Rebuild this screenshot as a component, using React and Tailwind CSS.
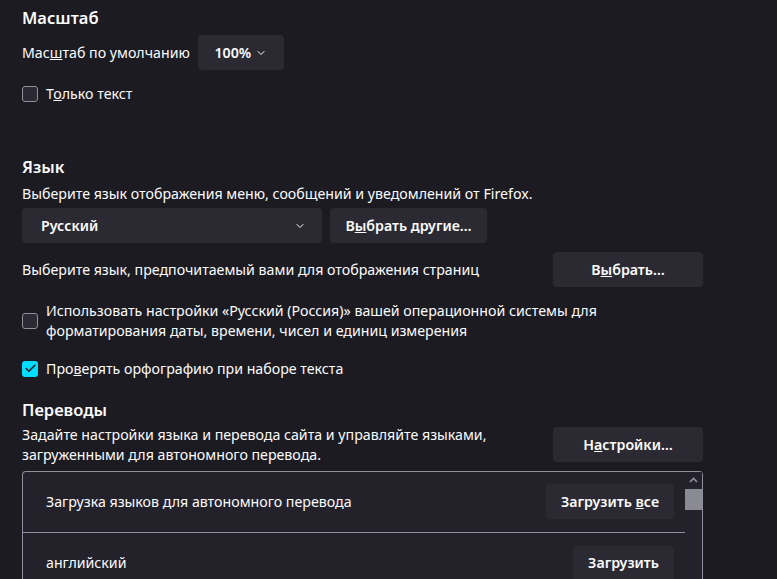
import { ChevronDown, Check } from 'lucide-react';

function Btn({ children, className = '' }) {
  return (
    <button className={`h-[35px] rounded-[4px] bg-[#2b2a33] text-[14.2px] font-semibold text-[#fbfbfe] ${className}`}>
      {children}
    </button>
  );
}

function Box({ checked }) {
  return checked ? (
    <span className="flex h-4 w-4 flex-shrink-0 items-center justify-center rounded-[3px] bg-[#00ddff]">
      <Check size={13} strokeWidth={3} className="text-[#1c1b22]" />
    </span>
  ) : (
    <span className="h-4 w-4 flex-shrink-0 rounded-[3px] border border-[#8f8f9d] bg-[#2b2a33]" />
  );
}

export default function App() {
  return (
    <div className="h-[579px] w-[777px] overflow-hidden bg-[#1c1b22] text-[#fbfbfe]" style={{ fontFamily: '"Noto Sans", sans-serif' }}>
      <div className="w-[703px] pl-[22px]">

        {/* Масштаб */}
        <h2 className="pt-[6px] text-[16.5px] font-semibold leading-6">Масштаб</h2>
        <div className="mt-[5px] flex items-center gap-[8px]">
          <span className="text-[14.2px]">Мас<u>ш</u>таб по умолчанию</span>
          <Btn className="flex w-[86px] items-center justify-center gap-1">
            100% <ChevronDown size={12} />
          </Btn>
        </div>
        <label className="mt-[13px] flex items-center gap-[8px] text-[14.2px]">
          <Box />
          <span>Т<u>о</u>лько текст</span>
        </label>

        {/* Язык */}
        <h2 className="mt-[51px] text-[16.5px] font-semibold leading-6">Язык</h2>
        <p className="mt-[5px] text-[14.2px] leading-5">Выберите язык отображения меню, сообщений и уведомлений от Firefox.</p>
        <div className="mt-[4px] flex gap-[8px]">
          <div className="flex h-[35px] w-[300px] items-center justify-between rounded-[4px] bg-[#2b2a33] pl-[19px] pr-[16px] text-[14.2px] font-semibold">
            Русский <ChevronDown size={12} />
          </div>
          <Btn className="w-[157px]">В<u>ы</u>брать другие…</Btn>
        </div>
        <div className="mt-[9px] flex items-center justify-between">
          <span className="text-[14.2px]">Выберите язык, предпочитаемый вами для отображения страниц</span>
          <Btn className="w-[150px]">В<u>ы</u>брать…</Btn>
        </div>
        <label className="mt-[14px] flex items-center gap-[8px] text-[14.2px] leading-[20px]">
          <Box />
          <span>Использовать настройки «Русский (Россия)» вашей операционной системы для<br />форматирования даты, времени, чисел и единиц измерения</span>
        </label>
        <label className="mt-[17px] flex items-center gap-[8px] text-[14.2px]">
          <Box checked />
          <span>Про<u>в</u>ерять орфографию при наборе текста</span>
        </label>

        {/* Переводы */}
        <h2 className="mt-[18px] text-[16.5px] font-semibold leading-6">Переводы</h2>
        <div className="mt-[3px] flex items-center justify-between">
          <p className="text-[14.2px] leading-5">Задайте настройки языка и перевода сайта и управляйте языками,<br />загруженными для автономного перевода.</p>
          <Btn className="w-[150px]">Н<u>а</u>стройки…</Btn>
        </div>

        <div className="mt-[6px] flex h-[120px] rounded-t-[4px] border border-b-0 border-[#8f8f9d] bg-[#23222b]">
          <div className="flex-1">
            <div className="flex h-[61px] items-center justify-between border-b border-[#8f8f9d] pl-[23px] pr-[11px]">
              <span className="text-[14.2px]">Загрузка языков для автономного перевода</span>
              <Btn className="w-[128px]">Загрузить <u>в</u>се</Btn>
            </div>
            <div className="flex h-[61px] items-center justify-between pl-[23px] pr-[11px]">
              <span className="text-[14.2px]">английский</span>
              <Btn className="w-[101px]">Загрузить</Btn>
            </div>
          </div>
          <div className="flex w-[17px] flex-col bg-[#23222b]">
            <div className="flex h-[17px] items-center justify-center text-[#8f8f9d]">
              <svg width="9" height="6" viewBox="0 0 9 6"><path d="M1 5 L4.5 1.5 L8 5" stroke="currentColor" strokeWidth="1.6" fill="none" /></svg>
            </div>
            <div className="h-[21px] bg-[#8a8a92]" />
          </div>
        </div>
      </div>
    </div>
  );
}
